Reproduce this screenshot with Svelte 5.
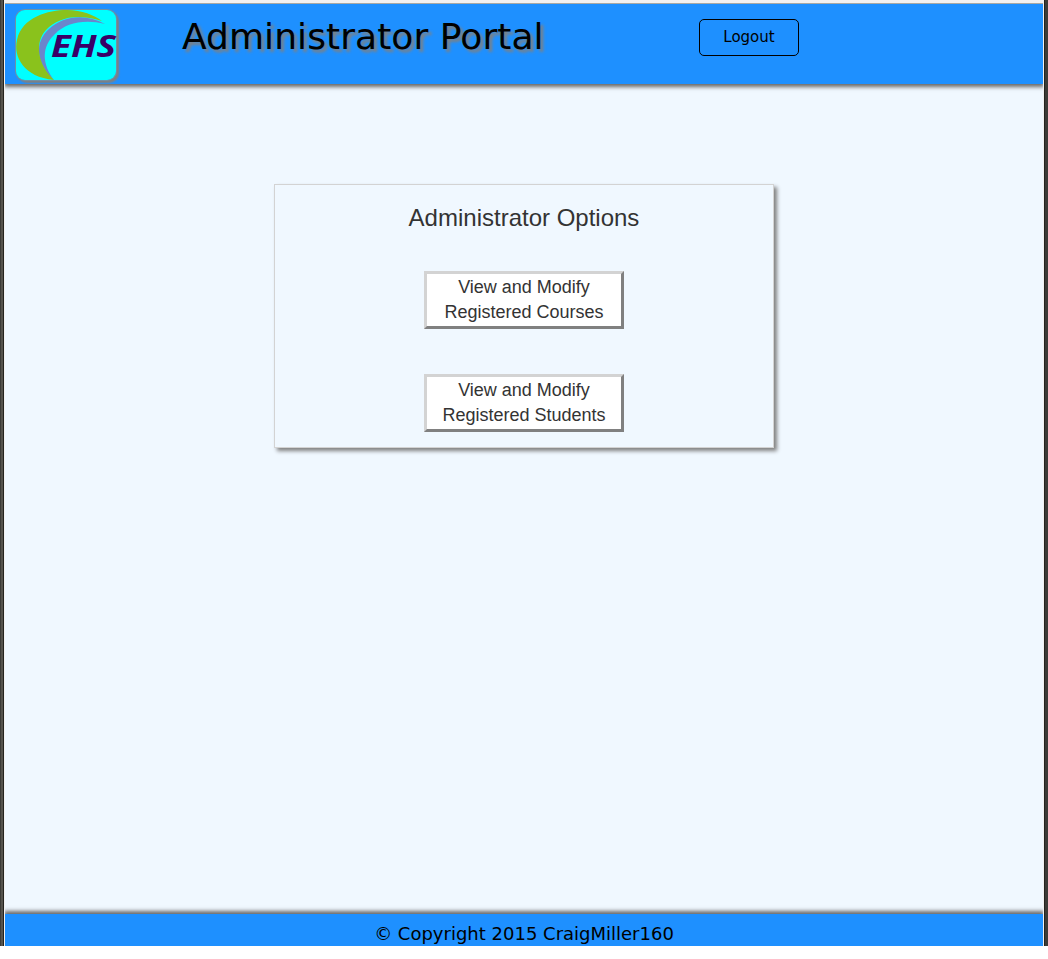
<script>
  const options = ['Courses', 'Students'];
</script>

<div class="window">
  <div class="page">
    <header>
      <svg class="logo" width="100" height="70" viewBox="0 0 100 70">
        <rect width="100" height="70" rx="9" fill="#00ffff" />
        <path d="M38 70C20 54 18 32 33 19C47 6 69 3 89 14C68 9 50 13 39 24C25 37 26 54 38 70Z" fill="#6a86cc" />
        <path d="M38 70C8 67 -3 47 1 30C6 7 32 0 51 0C66 0 78 5 86 11C62 3 42 7 30 20C18 33 22 55 38 70Z" fill="#8ac21c" />
        <text x="35" y="47" textLength="65" lengthAdjust="spacingAndGlyphs">EHS</text>
      </svg>
      <h1>Administrator Portal</h1>
      <button class="logout">Logout</button>
    </header>
    <main>
      <section>
        <h2>Administrator Options</h2>
        {#each options as option}
          <button class="option">View and Modify<br />Registered {option}</button>
        {/each}
      </section>
    </main>
    <footer>© Copyright 2015 CraigMiller160</footer>
  </div>
</div>

<style>
  :global(body) { background: #fff; }
  .window {
    box-sizing: border-box;
    width: 1048px;
    height: 946px;
    padding: 0 5px;
    background: linear-gradient(to right, #3c3b37 0 1px, #55534d 1px 3px, #24231f 3px 4px, #f2f1f0 4px 1044px, #24231f 1044px 1045px, #3c3b37 1045px);
  }
  .page {
    display: flex;
    flex-direction: column;
    box-sizing: border-box;
    height: 946px;
    padding-top: 3px;
    overflow: hidden;
    background: linear-gradient(#f2f1f0 0 3px, #f0f8ff 3px);
  }
  header {
    position: relative;
    box-sizing: border-box;
    display: flex;
    align-items: flex-start;
    height: 81px;
    flex: none;
    border-top: 1px solid #a8a8a4;
    padding: 6px 0 0 11px;
    background: #1e90ff;
    box-shadow: 0 2px 4px 1px #696969;
    clip-path: inset(0 0 -12px 0);
    font-family: "DejaVu Sans", sans-serif;
  }
  .logo {
    flex: none;
    overflow: visible;
    border-radius: 9px;
    box-shadow: 0 0 0 1px #6f91a5, 2px 2px 2px 1px #808080;
  }
  .logo text {
    font: italic bold 30px "Open Sans", "DejaVu Sans", sans-serif;
    fill: #390066;
  }
  h1 {
    width: 517px;
    margin: 6px 0 0 66px;
    font-size: 36px;
    line-height: 42px;
    font-weight: 400;
    letter-spacing: 0.07px;
    text-shadow: 3px 3px 3px #808080;
  }
  .logout {
    width: 100px;
    height: 37px;
    margin-top: 9px;
    padding: 0 0 2px;
    border: 1px solid #000;
    border-radius: 5px;
    background: transparent;
    color: #000;
    font: 15px "DejaVu Sans", sans-serif;
  }
  main {
    flex: 1;
    padding-top: 100px;
  }
  section {
    box-sizing: border-box;
    display: flex;
    flex-direction: column;
    align-items: center;
    width: 500px;
    height: 264px;
    margin: 0 auto;
    padding-top: 20px;
    border: 1px solid #d3d3d3;
    box-shadow: 3px 3px 4px #808080;
    color: #333;
    font-family: "Liberation Sans", Arial, sans-serif;
  }
  h2 {
    margin: 0;
    font-size: 24px;
    line-height: 26px;
    font-weight: 400;
  }
  .option {
    width: 200px;
    height: 58px;
    margin-top: 40px;
    padding: 0;
    border: 3px solid;
    border-color: #d3d3d3 #808080 #808080 #d3d3d3;
    background: #fff;
    color: #333;
    font: 18px/25px "Liberation Sans", Arial, sans-serif;
  }
  .option + .option { margin-top: 45px; }
  footer {
    height: 32px;
    flex: none;
    box-sizing: border-box;
    padding-top: 7px;
    background: #1e90ff;
    box-shadow: 0 -2px 4px 1px #696969;
    font: 18px/25px "DejaVu Sans", sans-serif;
    text-align: center;
  }
</style>
